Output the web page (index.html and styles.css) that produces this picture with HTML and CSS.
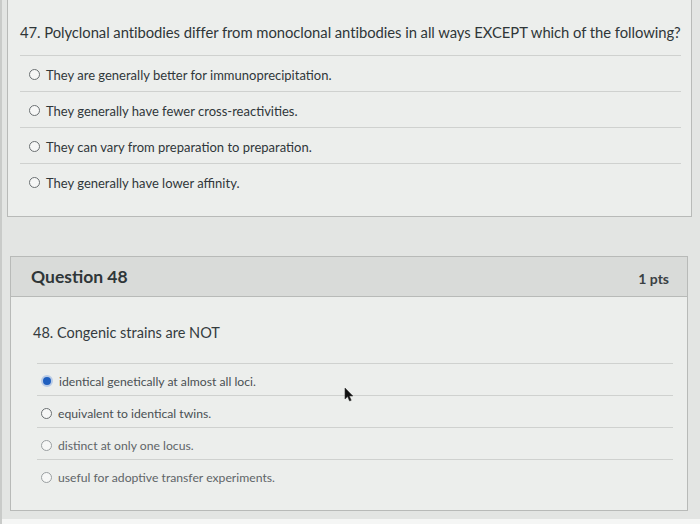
FILE: index.html
```html
<!DOCTYPE html>
<html>
<head>
<meta charset="utf-8">
<link rel="stylesheet" href="styles.css">
</head>
<body>
<div class="screen">
  <div class="card card-top">
    <div class="qtext qtext-47">47. Polyclonal antibodies differ from monoclonal antibodies in all ways EXCEPT which of the following?</div>
    <div class="answers">
      <div class="row"><span class="radio"></span><span class="label">They are generally better for immunoprecipitation.</span></div>
      <div class="row"><span class="radio"></span><span class="label">They generally have fewer cross-reactivities.</span></div>
      <div class="row"><span class="radio"></span><span class="label">They can vary from preparation to preparation.</span></div>
      <div class="row last"><span class="radio"></span><span class="label">They generally have lower affinity.</span></div>
    </div>
  </div>

  <div class="card card-48">
    <div class="header">
      <span class="title">Question 48</span>
      <span class="pts">1 pts</span>
    </div>
    <div class="body">
      <div class="qtext qtext-48">48. Congenic strains are NOT</div>
      <div class="answers answers-48">
        <div class="row"><span class="radio checked"></span><span class="label">identical genetically at almost all loci.</span></div>
        <div class="row"><span class="radio"></span><span class="label">equivalent to identical twins.</span></div>
        <div class="row fade"><span class="radio"></span><span class="label">distinct at only one locus.</span></div>
        <div class="row fade last"><span class="radio"></span><span class="label">useful for adoptive transfer experiments.</span></div>
      </div>
      <svg class="cursor" width="10" height="15" viewBox="0 0 10 15"><path d="M1 1 L1 12 L3.6 9.6 L5.6 14 L7.2 13.3 L5.3 9 L8.8 9 Z" fill="#111" stroke="#333" stroke-width="0.6"/></svg>
    </div>
  </div>
  <div class="footer"></div>
</div>
</body>
</html>
```

FILE: styles.css
```css
html, body {
  margin: 0;
  padding: 0;
}
body {
  width: 700px;
  height: 524px;
  overflow: hidden;
  background: #e3e5e3;
  font-family: Lato, "Open Sans", "Liberation Sans", sans-serif;
  color: #2f3638;
}
.screen {
  position: relative;
  width: 700px;
  height: 524px;
  display: flex;
  flex-direction: column;
  border-left: 2px solid #c9cbc9;
  box-sizing: border-box;
}
.card {
  box-sizing: border-box;
  border: 1px solid #b8bab8;
  background: #eceeec;
}
.card-top {
  margin-left: 5px;
  width: 685px;
  height: 217px;
  border-top: none;
  padding-top: 20px;
}
.qtext-47 {
  font-size: 14.8px;
  line-height: 24px;
  padding-left: 12px;
  white-space: nowrap;
  letter-spacing: -0.05px;
}
.answers {
  margin: 11px 10px 0 12px;
}
.row {
  display: flex;
  align-items: center;
  height: 36px;
  border-top: 1px solid #cfd1cf;
  box-sizing: border-box;
  padding-left: 9px;
  padding-top: 2px;
}
.radio {
  width: 9px;
  height: 9px;
  border: 1.5px solid #6b7072;
  border-radius: 50%;
  background: #f6f7f6;
  flex: none;
}
.label {
  margin-left: 6px;
  font-size: 13px;
  color: #30373a;
}
.card-48 {
  margin-top: 39px;
  margin-left: 8px;
  width: 678px;
  height: 255px;
  display: flex;
  flex-direction: column;
}
.header {
  height: 40px;
  flex: none;
  box-sizing: border-box;
  background: #d9dbd9;
  border-bottom: 1px solid #b8bab8;
  display: flex;
  align-items: center;
  justify-content: space-between;
  padding: 0 18px 0 20px;
}
.title {
  font-size: 17.5px;
  font-weight: 700;
  color: #2f3638;
}
.pts {
  font-size: 14px;
  font-weight: 700;
  color: #3a4143;
  padding-top: 3px;
}
.body {
  position: relative;
  flex: 1;
  padding-top: 27px;
}
.qtext-48 {
  font-size: 14.5px;
  line-height: 18px;
  padding-left: 22px;
  color: #343b3e;
}
.answers-48 {
  margin: 21px 14px 0 26px;
}
.answers-48 .row {
  height: 32px;
  padding-left: 4px;
  padding-top: 3px;
}
.answers-48 .label {
  font-size: 12.2px;
  margin-left: 6px;
  color: #4a5053;
}
.answers-48 .fade .label {
  color: #5f6568;
}
.answers-48 .fade .radio {
  border-color: #9a9fa1;
}
.radio.checked {
  width: 8px;
  height: 8px;
  border: 2px solid #b9cbe6;
  background: #1f5fbf;
}
.cursor {
  position: absolute;
  left: 333px;
  top: 90px;
}
.footer {
  flex: 1;
  margin-top: 8px;
  background: #f5f6f5;
}
```
